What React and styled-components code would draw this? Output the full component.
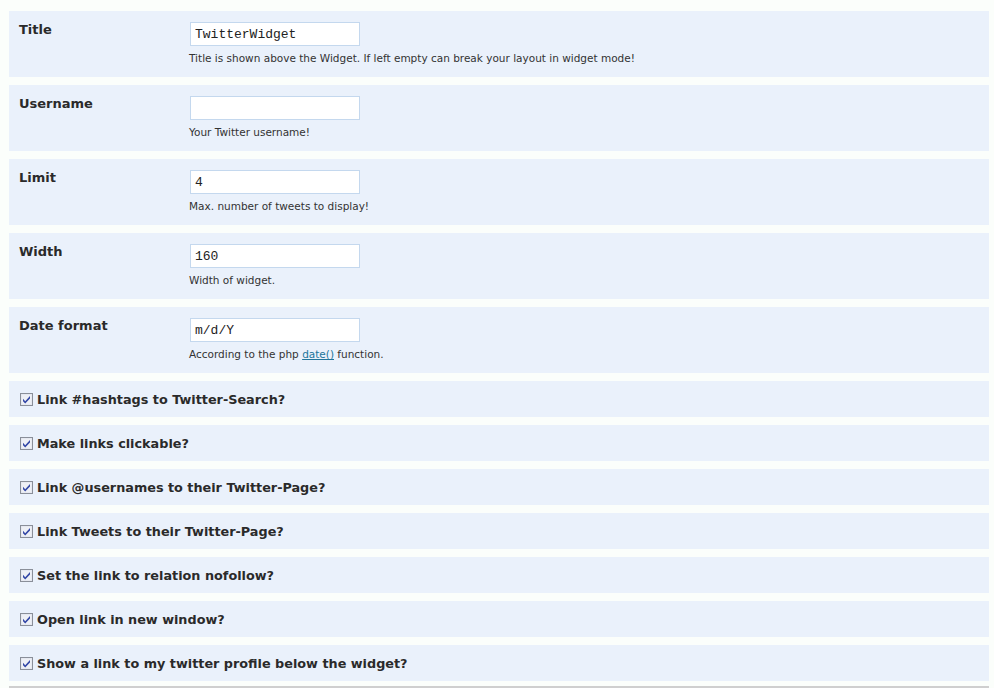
import React from "react";
import styled, { createGlobalStyle } from "styled-components";

const GlobalStyle = createGlobalStyle`
  body {
    margin: 0;
    background-color: #fbfefb;
    font-family: "DejaVu Sans", Verdana, sans-serif;
    color: #2b2b2b;
  }
`;

const Page = styled.div`
  display: flex;
  flex-direction: column;
  gap: 8px;
  width: 980px;
  padding: 11px 0 0 9px;
`;

const FieldRow = styled.div`
  display: flex;
  align-items: flex-start;
  background-color: #eaf1fb;
  height: 66px;
  box-sizing: border-box;
  padding: 11px 10px;
`;

const Label = styled.label`
  width: 171px;
  flex-shrink: 0;
  font-size: 13px;
  font-weight: bold;
  color: #2a2a2a;
`;

const Control = styled.div`
  display: flex;
  flex-direction: column;
  gap: 5px;
`;

const TextInput = styled.input`
  width: 170px;
  height: 24px;
  box-sizing: border-box;
  border: 1px solid #c4d8ee;
  background: #ffffff;
  padding: 2px 4px;
  font-family: "Liberation Mono", "Courier New", monospace;
  font-size: 13px;
  color: #222;
  outline: none;
`;

const Hint = styled.span`
  margin-left: -1px;
  font-size: 10.5px;
  line-height: 14px;
  color: #333;

  a {
    color: #21759b;
    text-decoration: underline;
  }
`;

const CheckRow = styled.div`
  display: flex;
  align-items: center;
  gap: 4px;
  background-color: #eaf1fb;
  height: 36px;
  padding: 0 11px;
  font-size: 12.8px;
  font-weight: bold;
  color: #2a2a2a;
`;

const BottomRule = styled.div`
  height: 2px;
  margin-top: -3px;
  background-color: #cfcfcf;
`;

const CheckBox = () => (
  <svg width="13" height="13" viewBox="0 0 13 13">
    <rect x="0.5" y="0.5" width="12" height="12" fill="#dfe3ec" stroke="#8a8f99" />
    <rect x="1.5" y="1.5" width="10" height="10" fill="#eef0f5" />
    <path d="M3 5.8 L5.2 8.2 L10 3 L10 5.4 L5.2 10.6 L3 8.2 Z" fill="#3347a6" />
  </svg>
);

const fields = [
  { label: "Title", value: "TwitterWidget", hint: "Title is shown above the Widget. If left empty can break your layout in widget mode!" },
  { label: "Username", value: "", hint: "Your Twitter username!" },
  { label: "Limit", value: "4", hint: "Max. number of tweets to display!" },
  { label: "Width", value: "160", hint: "Width of widget." },
  {
    label: "Date format",
    value: "m/d/Y",
    hint: (
      <>
        According to the php <a href="#">date()</a> function.
      </>
    ),
  },
];

const options = [
  "Link #hashtags to Twitter-Search?",
  "Make links clickable?",
  "Link @usernames to their Twitter-Page?",
  "Link Tweets to their Twitter-Page?",
  "Set the link to relation nofollow?",
  "Open link in new window?",
  "Show a link to my twitter profile below the widget?",
];

export default function App() {
  return (
    <>
      <GlobalStyle />
      <Page>
        {fields.map(f => (
          <FieldRow key={f.label}>
            <Label>{f.label}</Label>
            <Control>
              <TextInput defaultValue={f.value} />
              <Hint>{f.hint}</Hint>
            </Control>
          </FieldRow>
        ))}
        {options.map(o => (
          <CheckRow key={o}>
            <CheckBox />
            {o}
          </CheckRow>
        ))}
        <BottomRule />
      </Page>
    </>
  );
}
